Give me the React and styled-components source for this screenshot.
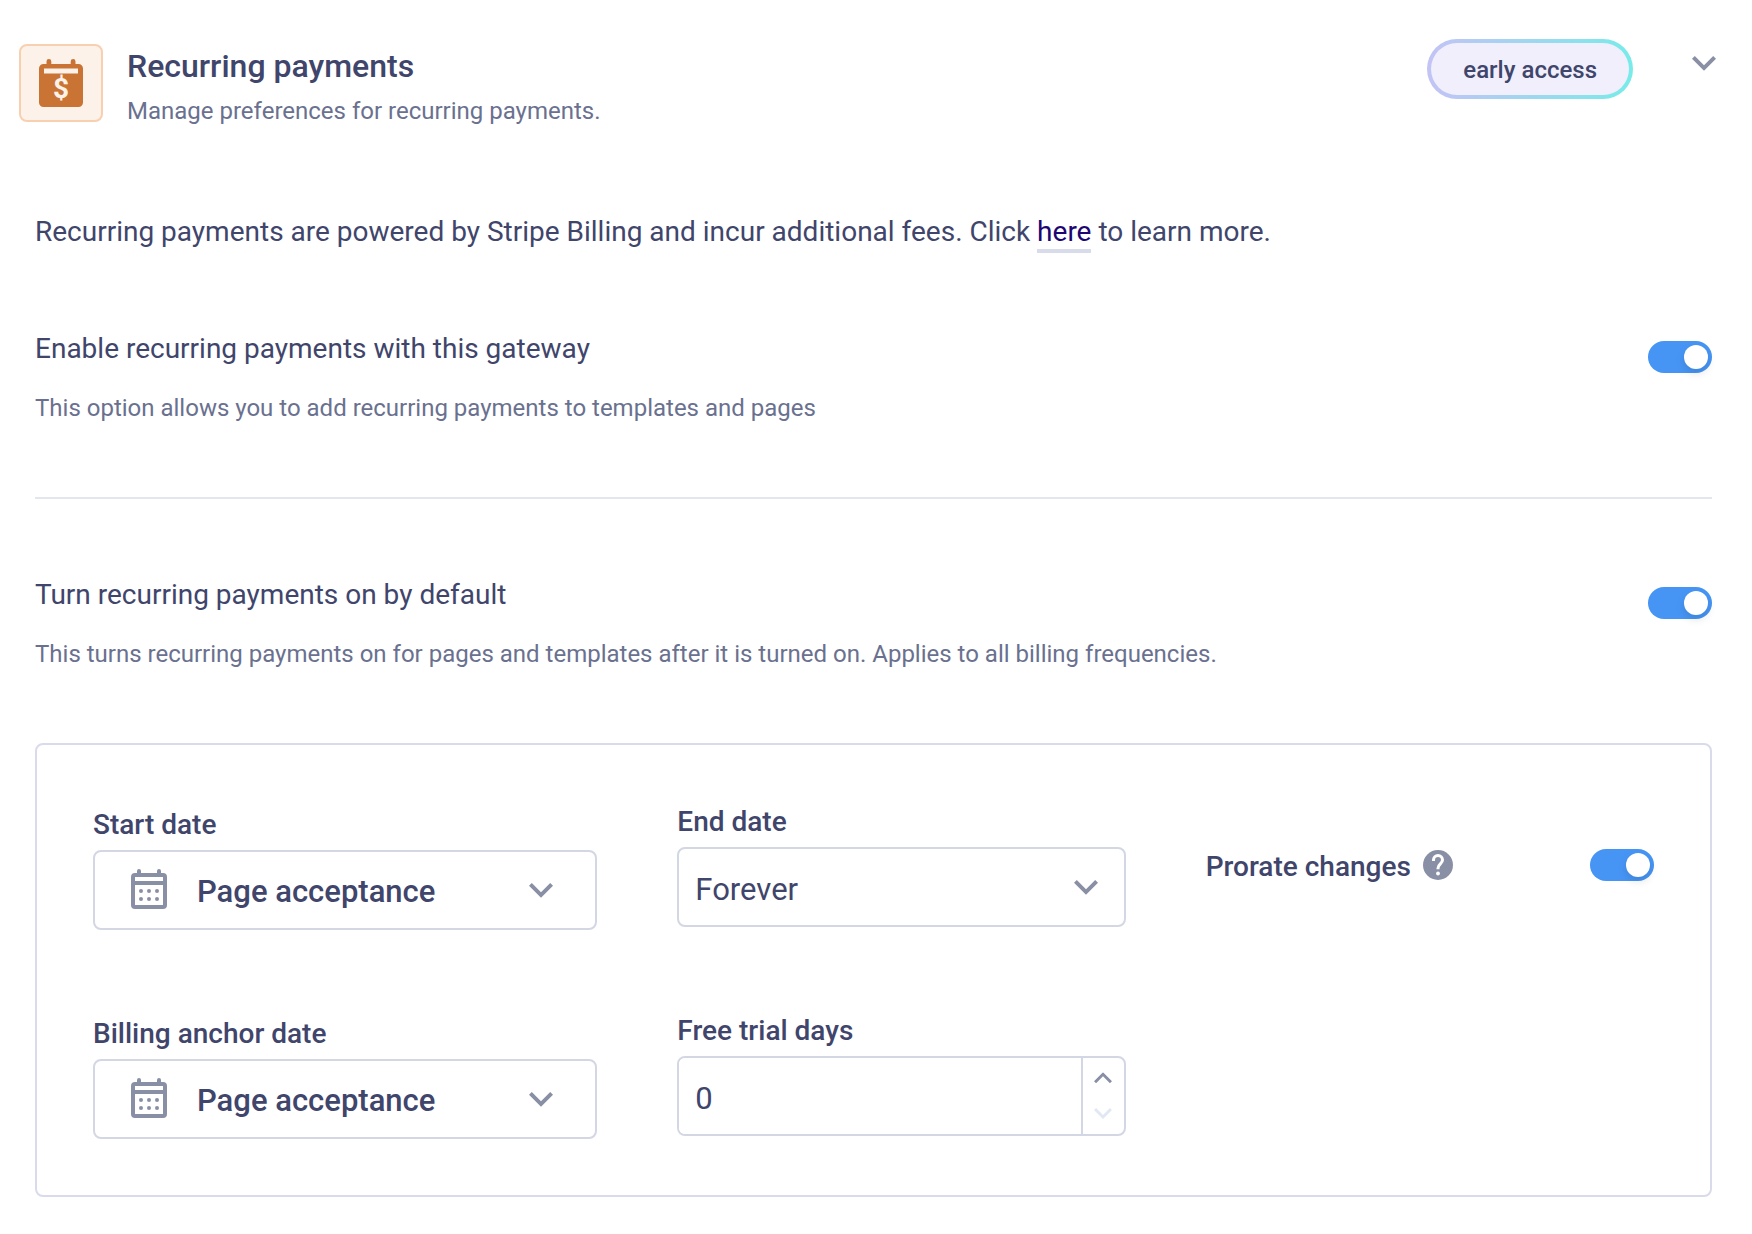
import React, { useState } from 'react';
import styled, { createGlobalStyle } from 'styled-components';

const GlobalStyle = createGlobalStyle`
  * {
    box-sizing: border-box;
  }

  body {
    margin: 0;
    background: #ffffff;
    color: #3f456b;
    font-family: Roboto, 'Liberation Sans', sans-serif;
  }
`;

const Header = styled.header`
  display: flex;
  justify-content: space-between;
  align-items: flex-start;
  padding: 39px 36px 0 19px;
`;

const Identity = styled.div`
  display: flex;
  gap: 24px;
  padding-top: 5px;
`;

const IconTile = styled.div`
  display: flex;
  align-items: center;
  justify-content: center;
  width: 84px;
  height: 78px;
  border: 2px solid #f8d0b0;
  border-radius: 8px;
  background: #fdf2e9;
`;

const Title = styled.h1`
  margin: 0;
  font-size: 32px;
  font-weight: 500;
  line-height: 45px;
`;

const Subtitle = styled.p`
  margin: 0;
  color: #6a718f;
  font-size: 24px;
  line-height: 45px;
`;

const HeaderActions = styled.div`
  display: flex;
  align-items: flex-start;
  gap: 59px;
`;

const Badge = styled.span`
  padding: 2px 32px 0;
  border: 4px solid transparent;
  border-radius: 30px;
  background:
    linear-gradient(#f0effb, #f0effb) padding-box,
    linear-gradient(90deg, #c3c3f6, #78ebe9) border-box;
  font-size: 24px;
  font-weight: 500;
  line-height: 50px;
`;

const IconButton = styled.button`
  display: flex;
  align-items: center;
  justify-content: center;
  height: 48px;
  padding: 0;
  border: 0;
  background: transparent;
  color: #8990a5;
  cursor: pointer;
`;

const Content = styled.main`
  padding: 0 40px 37px 35px;
`;

const Intro = styled.p`
  margin: 78px 0 77px;
  font-size: 28px;
  line-height: 40px;

  a {
    padding-bottom: 1px;
    border-bottom: 4px solid #d8dbea;
    color: #1d0673;
    text-decoration: none;
  }
`;

const Setting = styled.section`
  display: flex;
  justify-content: space-between;
  align-items: flex-start;
  padding-bottom: 69px;

  input {
    margin-top: 12px;
  }
`;

const SettingLabel = styled.label`
  display: block;
  margin-bottom: 19px;
  font-size: 28px;
  line-height: 40px;
`;

const SettingHint = styled.p`
  margin: 0;
  color: #6a718f;
  font-size: 24px;
  line-height: 40px;
`;

const Divider = styled.hr`
  height: 2px;
  margin: 0 0 76px;
  border: 0;
  background: #e4e6ed;
`;

const Switch = styled.input`
  appearance: none;
  flex-shrink: 0;
  width: 64px;
  height: 32px;
  margin: 0;
  padding: 4px;
  border-radius: 16px;
  background: #c9cddb;
  cursor: pointer;

  &::before {
    content: '';
    display: block;
    width: 24px;
    height: 24px;
    border-radius: 50%;
    background: #ffffff;
    box-shadow: 0 4px 10px rgba(0, 0, 0, 0.12);
  }

  &:checked {
    background: #4695f5;
  }

  &:checked::before {
    margin-left: auto;
  }
`;

const Panel = styled.section`
  display: grid;
  grid-template-columns: minmax(0, 9fr) minmax(0, 8fr) minmax(0, 8fr);
  column-gap: 80px;
  padding: 57px 56px 56px;
  border: 2px solid #d9dbeb;
  border-radius: 8px;
`;

const Column = styled.div`
  display: flex;
  flex-direction: column;
  gap: 84px;
  padding-top: ${(p) => p.$top || 0}px;
`;

const Field = styled.div`
  display: flex;
  flex-direction: column;
  gap: 5px;
`;

const FieldLabel = styled.label`
  font-size: 28px;
  font-weight: 500;
  line-height: 40px;
`;

const SelectBox = styled.div`
  position: relative;

  svg {
    position: absolute;
    color: #8990a5;
    pointer-events: none;
  }

  .calendar {
    top: 19px;
    left: 38px;
  }

  .chevron {
    top: 33px;
    right: ${(p) => (p.$icon ? 44 : 28)}px;
  }
`;

const Select = styled.select`
  appearance: none;
  width: 100%;
  height: 80px;
  padding: ${(p) => (p.$icon ? '2px 80px 0 102px' : '4px 80px 0 16px')};
  border: 2px solid #d3d7e4;
  border-radius: 8px;
  background: #ffffff;
  color: inherit;
  font-family: inherit;
  font-size: 31px;
  font-weight: ${(p) => (p.$icon ? 500 : 400)};
`;

const NumberBox = styled.div`
  display: flex;
  height: 80px;
  border: 2px solid #d3d7e4;
  border-radius: 8px;
  overflow: hidden;
`;

const NumberInput = styled.input`
  flex: 1;
  min-width: 0;
  padding: 4px 16px 0;
  border: 0;
  color: inherit;
  font-family: inherit;
  font-size: 31px;
`;

const Stepper = styled.div`
  display: flex;
  flex-direction: column;
  width: 43px;
  padding: 2px 0;
  border-left: 2px solid #d3d7e4;
`;

const StepButton = styled(IconButton)`
  flex: 1;
  height: auto;

  &:disabled {
    color: #e2e8f3;
    cursor: default;
  }
`;

const Prorate = styled.div`
  display: flex;
  align-items: center;
  height: 32px;

  label {
    padding-top: 4px;
  }

  button {
    margin: 0 auto 0 12px;
  }
`;

const Chevron = ({ width = 24, up }) => (
  <svg
    className="chevron"
    width={width}
    height={(width * 15) / 24}
    viewBox="0 0 24 15"
    transform={up ? 'rotate(180)' : undefined}
    fill="currentColor"
    aria-hidden="true"
  >
    <path d="M21.2 0 12 9.2 2.8 0 0 2.8l12 12 12-12z" />
  </svg>
);

const CalendarIcon = () => (
  <svg className="calendar" width="36" height="40" viewBox="0 0 36 40" fill="currentColor" aria-hidden="true">
    <path
      fillRule="evenodd"
      d="M6 4V2a2 2 0 0 1 4 0v2h16V2a2 2 0 0 1 4 0v2h2a4 4 0 0 1 4 4v28a4 4 0 0 1-4 4H4a4 4 0 0 1-4-4V8a4 4 0 0 1 4-4zM4 8v4h28V8zM4 16v20h28V16z"
    />
    {[10, 18, 26].map((x) => (
      <g key={x}>
        <circle cx={x} cy="22" r="2" />
        <circle cx={x} cy="30" r="2" />
      </g>
    ))}
  </svg>
);

const BillingIcon = () => (
  <svg width="44" height="48" viewBox="0 0 44 48" aria-hidden="true">
    <path
      fill="#c97435"
      fillRule="evenodd"
      d="M7.500 5V2.400a2.400 2.400 0 0 1 4.800 0V5h19.400V2.400a2.400 2.400 0 0 1 4.800 0V5H39.500a4.500 4.500 0 0 1 4.500 4.500v34a4.500 4.500 0 0 1-4.500 4.500h-35a4.500 4.500 0 0 1-4.500-4.500v-34A4.500 4.500 0 0 1 4.500 5zM5 9.500v5h34v-5z"
    />
    <text x="22" y="39" fill="#fdf2e9" fontSize="28" fontWeight="700" textAnchor="middle">
      $
    </text>
  </svg>
);

const HelpIcon = () => (
  <svg width="30" height="30" viewBox="0 0 30 30" aria-hidden="true">
    <circle cx="15" cy="15" r="15" fill="#8990a5" />
    <path
      d="M10.500 11V10a4.500 4.500 0 0 1 9 0c0 3.800-4.500 4-4.500 8.300v1"
      fill="none"
      stroke="#ffffff"
      strokeWidth="3"
    />
    <circle cx="15" cy="23.500" r="1.900" fill="#ffffff" />
  </svg>
);

const DateField = ({ id, label, icon, options }) => (
  <Field>
    <FieldLabel htmlFor={id}>{label}</FieldLabel>
    <SelectBox $icon={icon}>
      {icon && <CalendarIcon />}
      <Select id={id} $icon={icon}>
        {options.map((option) => (
          <option key={option}>{option}</option>
        ))}
      </Select>
      <Chevron />
    </SelectBox>
  </Field>
);

const ToggleSetting = ({ id, label, hint }) => (
  <Setting>
    <div>
      <SettingLabel htmlFor={id}>{label}</SettingLabel>
      <SettingHint id={`${id}-hint`}>{hint}</SettingHint>
    </div>
    <Switch id={id} type="checkbox" role="switch" defaultChecked aria-describedby={`${id}-hint`} />
  </Setting>
);

const App = () => {
  const [trialDays, setTrialDays] = useState(0);

  return (
    <>
      <GlobalStyle />
      <Header>
        <Identity>
          <IconTile>
            <BillingIcon />
          </IconTile>
          <div>
            <Title>Recurring payments</Title>
            <Subtitle>Manage preferences for recurring payments.</Subtitle>
          </div>
        </Identity>
        <HeaderActions>
          <Badge>early access</Badge>
          <IconButton type="button" aria-label="Collapse section">
            <Chevron />
          </IconButton>
        </HeaderActions>
      </Header>

      <Content>
        <Intro>
          Recurring payments are powered by Stripe Billing and incur additional fees. Click{' '}
          <a href="#fees">here</a> to learn more.
        </Intro>

        <ToggleSetting
          id="enable-recurring"
          label="Enable recurring payments with this gateway"
          hint="This option allows you to add recurring payments to templates and pages"
        />
        <Divider />
        <ToggleSetting
          id="default-recurring"
          label="Turn recurring payments on by default"
          hint="This turns recurring payments on for pages and templates after it is turned on. Applies to all billing frequencies."
        />

        <Panel>
          <Column $top={3}>
            <DateField id="start-date" label="Start date" icon options={['Page acceptance']} />
            <DateField id="anchor-date" label="Billing anchor date" icon options={['Page acceptance']} />
          </Column>

          <Column>
            <DateField id="end-date" label="End date" options={['Forever']} />
            <Field>
              <FieldLabel htmlFor="trial-days">Free trial days</FieldLabel>
              <NumberBox>
                <NumberInput
                  id="trial-days"
                  type="text"
                  inputMode="numeric"
                  value={trialDays}
                  onChange={(e) => setTrialDays(Number(e.target.value) || 0)}
                />
                <Stepper>
                  <StepButton type="button" aria-label="Increase" onClick={() => setTrialDays(trialDays + 1)}>
                    <Chevron width={18} up />
                  </StepButton>
                  <StepButton
                    type="button"
                    aria-label="Decrease"
                    disabled={trialDays === 0}
                    onClick={() => setTrialDays(trialDays - 1)}
                  >
                    <Chevron width={18} />
                  </StepButton>
                </Stepper>
              </NumberBox>
            </Field>
          </Column>

          <Column $top={47}>
            <Prorate>
              <FieldLabel htmlFor="prorate">Prorate changes</FieldLabel>
              <IconButton type="button" aria-label="About prorating">
                <HelpIcon />
              </IconButton>
              <Switch id="prorate" type="checkbox" role="switch" defaultChecked />
            </Prorate>
          </Column>
        </Panel>
      </Content>
    </>
  );
};

export default App;
